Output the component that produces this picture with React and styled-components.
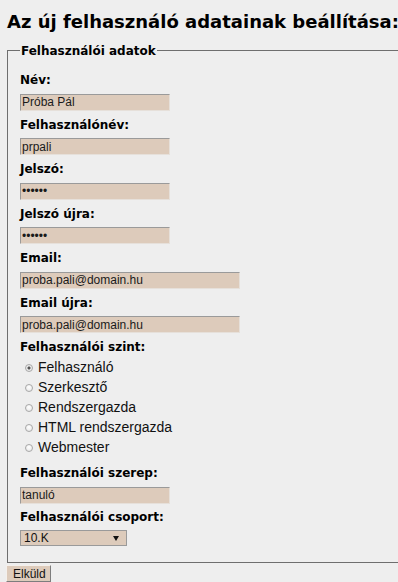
import React, { useState } from 'react';
import styled, { createGlobalStyle } from 'styled-components';

const fields = [
  { label: 'Név:', name: 'nev', value: 'Próba Pál', type: 'text' },
  { label: 'Felhasználónév:', name: 'fnev', value: 'prpali', type: 'text' },
  { label: 'Jelszó:', name: 'jelszo', value: 'prpali', type: 'password' },
  { label: 'Jelszó újra:', name: 'jelszo2', value: 'prpali', type: 'password' },
  { label: 'Email:', name: 'email', value: 'proba.pali@domain.hu', type: 'text', wide: true },
  { label: 'Email újra:', name: 'email2', value: 'proba.pali@domain.hu', type: 'text', wide: true },
];

const levels = ['Felhasználó', 'Szerkesztő', 'Rendszergazda', 'HTML rendszergazda', 'Webmester'];

const App = () => {
  const [level, setLevel] = useState('Felhasználó');

  return (
    <>
      <GlobalStyle />
      <Page>
        <Title>Az új felhasználó adatainak beállítása:</Title>
        <Fieldset>
          <Legend>Felhasználói adatok</Legend>
          {fields.map((f) => (
            <Field key={f.name}>
              <Label htmlFor={f.name}>{f.label}</Label>
              <TextInput id={f.name} type={f.type} defaultValue={f.value} $wide={f.wide} />
            </Field>
          ))}

          <Field $gap="8px">
            <Label as="span">Felhasználói szint:</Label>
            <RadioList>
              {levels.map((l) => (
                <RadioRow key={l}>
                  <Radio
                    type="radio"
                    name="szint"
                    checked={level === l}
                    onChange={() => setLevel(l)}
                  />
                  {l}
                </RadioRow>
              ))}
            </RadioList>
          </Field>

          <Field $gap="5px">
            <Label htmlFor="szerep">Felhasználói szerep:</Label>
            <TextInput id="szerep" type="text" defaultValue="tanuló" />
          </Field>

          <Field $gap="0">
            <Label as="span">Felhasználói csoport:</Label>
            <Select>
              <span>10.K</span>
              <svg width="6" height="5" viewBox="0 0 6 5">
                <polygon points="0,0 6,0 3,5" fill="#111" />
              </svg>
            </Select>
          </Field>
        </Fieldset>
        <SubmitButton type="button">Elküld</SubmitButton>
      </Page>
    </>
  );
};

const GlobalStyle = createGlobalStyle`
  html, body {
    margin: 0;
    padding: 0;
    background: #eeeeee;
    overflow: hidden;
  }
`;

const Page = styled.div`
  display: flex;
  flex-direction: column;
  align-items: flex-start;
  padding-left: 6px;
  font-family: "DejaVu Sans", Verdana, sans-serif;
  color: #000;
`;

const Title = styled.h1`
  margin: 0;
  padding: 11px 0 0 1px;
  font-size: 18px;
  line-height: 22px;
  font-weight: bold;
  white-space: nowrap;
`;

const Fieldset = styled.fieldset`
  margin: 9.5px 0 0 1px;
  padding: 13.5px 0 16px 12px;
  width: 391px;
  box-sizing: border-box;
  border: 1px solid #6e6e6e;
  border-right: none;
  display: flex;
  flex-direction: column;
  align-items: flex-start;
`;

const Legend = styled.legend`
  padding: 0 1px;
  font-size: 12px;
  line-height: 16px;
  font-weight: bold;
`;

const Field = styled.div`
  display: flex;
  flex-direction: column;
  align-items: flex-start;
  margin-bottom: ${({ $gap }) => $gap || '6px'};
`;

const Label = styled.label`
  display: block;
  font-size: 12px;
  line-height: 17px;
  font-weight: bold;
  margin-bottom: 4.5px;
`;

const TextInput = styled.input`
  box-sizing: border-box;
  width: ${({ $wide }) => ($wide ? '220px' : '150px')};
  height: 17px;
  margin: 0;
  padding: 0 1px;
  border-style: solid;
  border-width: 1px;
  border-color: #9a9a9a #e6e0da #e6e0da #9a9a9a;
  background: #ddcbbb;
  font-family: "Liberation Sans", Arial, sans-serif;
  font-size: 12px;
  color: #1a1a1a;
  outline: none;
`;

const RadioList = styled.div`
  display: flex;
  flex-direction: column;
  margin-top: -3.5px;
`;

const RadioRow = styled.label`
  display: flex;
  align-items: center;
  gap: 5px;
  height: 20px;
  padding-left: 5px;
  font-family: "Liberation Sans", Arial, sans-serif;
  font-size: 14px;
  color: #111;
`;

const Radio = styled.input`
  appearance: none;
  -webkit-appearance: none;
  box-sizing: border-box;
  width: 8px;
  height: 8px;
  margin: 1px 0 0 0;
  border: 1px solid #a8a8a8;
  border-radius: 50%;
  background: radial-gradient(circle at 50% 35%, #ffffff 0%, #e4e4e4 100%);

  &:checked {
    background: radial-gradient(circle, #555 0, #555 1.3px, #f0f0f0 1.8px, #dedede 100%);
  }
`;

const Select = styled.div`
  box-sizing: border-box;
  width: 107px;
  height: 16px;
  display: flex;
  align-items: center;
  justify-content: space-between;
  padding: 0 7px 0 3px;
  border: 1px solid #9a9a9a;
  background: #ddcbbb;
  font-family: "Liberation Sans", Arial, sans-serif;
  font-size: 12px;
  color: #111;
`;

const SubmitButton = styled.button`
  margin-top: 2px;
  height: 17px;
  padding: 0 4px 0 6px;
  border-style: solid;
  border-width: 1px;
  border-color: #f4f0ec #7d7d7d #7d7d7d #f4f0ec;
  background: #ddcbbb;
  font-family: "Liberation Sans", Arial, sans-serif;
  font-size: 12px;
  line-height: 14px;
  color: #111;
`;

export default App;
